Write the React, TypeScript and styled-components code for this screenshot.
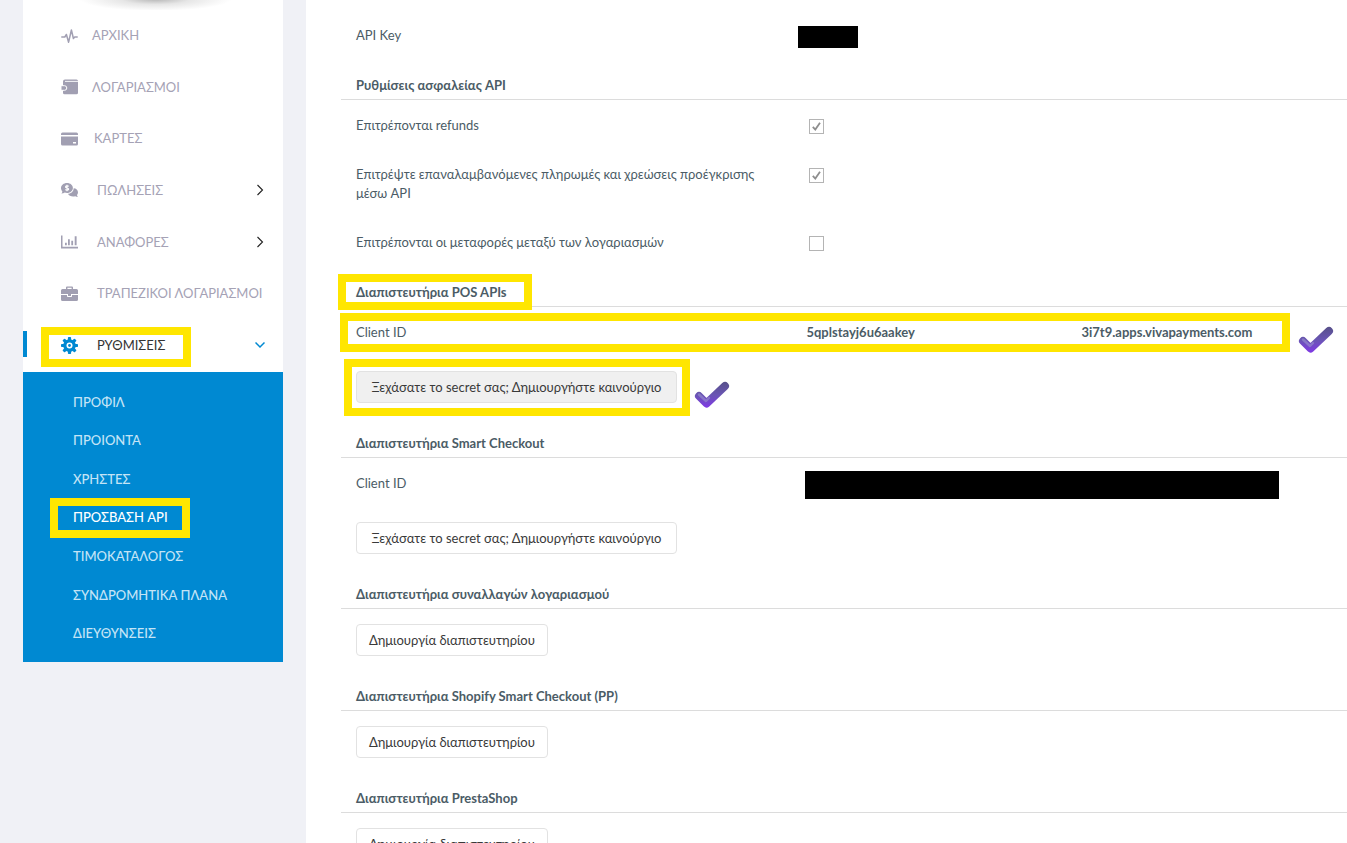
import React from "react";
import styled, { createGlobalStyle, css } from "styled-components";

const GlobalStyle = createGlobalStyle`
  *, *::before, *::after { box-sizing: border-box; }
  body {
    margin: 0;
    background: #f0f1f6;
    color: #4b5c66;
    font-family: Lato, "Noto Sans", sans-serif;
    font-size: 13px;
    line-height: 19px;
  }
`;

const Shell = styled.div`
  display: flex;
  align-items: stretch;
  height: 100vh;
  overflow: hidden;
  padding-left: 23px;
`;

const Sidebar = styled.aside`
  flex: 0 0 260px;
  align-self: flex-start;
  margin-right: 23px;
  background: #fff;
`;

const AvatarShade = styled.div`
  height: 10px;
  background: radial-gradient(ellipse 76px 12px at 51% -1px, #b4b4b4 0%, #e6e6e6 45%, #fff 100%);
`;

const Menu = styled.nav`
  display: grid;
  grid-auto-rows: 1fr;
  height: 362px;
  padding-bottom: 1px;
`;

const MenuLink = styled.a<{ $active?: boolean; $gap: number }>`
  position: relative;
  display: flex;
  align-items: center;
  gap: ${(p) => p.$gap}px;
  padding: 0 18px 0 38px;
  color: ${(p) => (p.$active ? "#333" : "#a5a2b5")};
  text-decoration: none;
  white-space: nowrap;

  > svg:first-of-type {
    flex: none;
    color: ${(p) => (p.$active ? "#0089d2" : "#a19fb2")};
  }

  ${(p) =>
    p.$active &&
    css`
      &::before {
        content: "";
        position: absolute;
        left: 0;
        top: 12px;
        width: 4px;
        height: 26px;
        background: #0089d2;
      }
    `}
`;

const Chevron = styled.svg<{ $open?: boolean }>`
  flex: none;
  margin-left: auto;
  color: ${(p) => (p.$open ? "#0089d2" : "#222")};
`;

const SubMenu = styled.nav`
  display: grid;
  grid-auto-rows: 1fr;
  height: 290px;
  padding: 11px 0 9px;
  background: #0089d2;
`;

const SubLink = styled.a<{ $active?: boolean }>`
  position: relative;
  display: flex;
  align-items: center;
  padding-left: 50px;
  color: ${(p) => (p.$active ? "#fff" : "#c4e4f6")};
  font-weight: 500;
  text-decoration: none;
`;

const Panel = styled.main`
  flex: 1;
  min-width: 0;
  padding: 25px 0 0 35px;
  background: #fff;
`;

const Section = styled.section`
  margin-bottom: 31px;
`;

const Heading = styled.h2`
  margin: 0;
  padding: 0 15px 4px;
  border-bottom: 1px solid #dcdcdc;
  font-size: 13px;
  line-height: 19px;
  font-weight: 700;
`;

const HeadingText = styled.span`
  position: relative;
  display: inline-block;
  vertical-align: top;
`;

const Body = styled.div<{ $flush?: boolean }>`
  display: flex;
  flex-direction: column;
  align-items: stretch;
  gap: 29px;
  padding: ${(p) => (p.$flush ? 0 : 15)}px 0 0 15px;
`;

const Row = styled.div`
  position: relative;
  display: grid;
  grid-template-columns: 5fr 6fr;
  padding-top: 1px;
`;

const Label = styled.label`
  padding-right: 24px;
`;

const Term = styled.span`
  padding-right: 24px;
`;

const Value = styled.div`
  position: relative;
  display: flex;
  align-items: flex-start;
`;

const ClientId = styled.strong`
  flex: 0 0 275px;
`;

const ClientHost = styled.strong``;

const Check = styled.span`
  display: grid;
  width: 15px;
  height: 15px;
  margin: 3px 0 0 3px;

  > * {
    grid-area: 1 / 1;
  }
  svg {
    pointer-events: none;
  }
`;

const CheckInput = styled.input`
  appearance: none;
  width: 15px;
  height: 15px;
  margin: 0;
  border: 1px solid #b4b4b4;
  background: #fff;
`;

const ButtonLine = styled.div`
  display: flex;
`;

const ButtonWrap = styled.div`
  position: relative;
`;

const Button = styled.button<{ $hover?: boolean; $wide?: boolean }>`
  height: 32px;
  min-width: ${(p) => (p.$wide ? 321 : 192)}px;
  padding: 0 12px;
  border: 1px solid #e2e2e2;
  border-radius: 4px;
  background: ${(p) => (p.$hover ? "#f0f0f0" : "#fff")};
  color: #3a3a3a;
  font: inherit;
  white-space: nowrap;
`;

const Redaction = styled.span<{ $x: number; $y: number; $w: number; $h: number }>`
  position: absolute;
  left: ${(p) => p.$x}px;
  top: ${(p) => p.$y}px;
  width: ${(p) => p.$w}px;
  height: ${(p) => p.$h}px;
  background: #000;
`;

/* inset order: top right bottom left */
const Marker = styled.span<{ $inset: string }>`
  position: absolute;
  inset: ${(p) => p.$inset};
  border: 8px solid #ffe600;
  pointer-events: none;
`;

const TickSvg = styled.svg<{ $right: number; $top: number }>`
  position: absolute;
  right: ${(p) => p.$right}px;
  top: ${(p) => p.$top}px;
`;

function Tick({ id, right, top }: { id: string; right: number; top: number }) {
  return (
    <TickSvg $right={right} $top={top} width="36" height="28" viewBox="0 0 36 28" fill="none" aria-hidden="true">
      <defs>
        <linearGradient id={id} x1="0" y1="1" x2="0" y2="27" gradientUnits="userSpaceOnUse">
          <stop offset="0" stopColor="#57508a" />
          <stop offset="0.5" stopColor="#6a55b4" />
          <stop offset="1" stopColor="#8038e6" />
        </linearGradient>
      </defs>
      <path d="M5 15 12.500 22.500 31 5" stroke={`url(#${id})`} strokeWidth="8" strokeLinecap="round" strokeLinejoin="round" />
      <path d="M5 13.500 12 20 15 17" stroke="#9a93cf" strokeOpacity=".6" strokeWidth="2.400" strokeLinecap="round" strokeLinejoin="round" />
    </TickSvg>
  );
}

const iconProps = { width: 17, height: 16, viewBox: "0 0 17 16", "aria-hidden": true } as const;

const PulseIcon = () => (
  <svg {...iconProps} fill="none" stroke="currentColor" strokeWidth="1.500" strokeLinecap="round" strokeLinejoin="round">
    <path d="M.8 9H3.800L5.400 6.500 7.600 14.200 10.400 2l2 8.500L13.700 9h2.500" />
  </svg>
);

const WalletIcon = () => (
  <svg {...iconProps} fill="currentColor">
    <path d="M4 .5h11.500A1.500 1.500 0 0 1 17 2v11.700a1.500 1.500 0 0 1-1.500 1.500h-12A1.500 1.500 0 0 1 2 13.700V2.500a2 2 0 0 1 2-2Z" />
    <path d="M4 2.400H17" stroke="#fff" strokeWidth=".9" />
    <path d="M0 6.700h3.500a2.300 2.300 0 0 1 0 4.600H0Z" stroke="#fff" strokeWidth="1" />
  </svg>
);

const CardIcon = () => (
  <svg {...iconProps} fill="currentColor" fillRule="evenodd">
    <path d="M1.500 1.500h14A1.500 1.500 0 0 1 17 3v1H0V3a1.500 1.500 0 0 1 1.500-1.500ZM0 5.500h17v7.500a1.500 1.500 0 0 1-1.500 1.500h-14A1.500 1.500 0 0 1 0 13Zm12 5.500v1.500h3v-1.500Z" />
  </svg>
);

const SalesIcon = () => (
  <svg {...iconProps} fill="currentColor">
    <path d="M12.700 6.200c2.400.1 4.300 1.900 4.300 4.100 0 1-.4 1.900-1 2.600.1.800.5 1.500 1 2.100-1 0-2-.3-2.800-.8-3 .9-6.200-.2-7.200-2.500 3.200 0 5.600-2.500 5.700-5.500Z" />
    <path d="M6 1c3.300 0 5.900 2.200 5.900 5s-2.600 5-5.900 5c-.8 0-1.500-.1-2.200-.4-.9.600-2 .9-3.500.9.600-.6 1-1.300 1.100-2.100C.5 8.500 0 7.300 0 6c0-2.800 2.700-5 6-5Z" />
    <path d="M7.700 4.300C7.200 3.700 4.500 3.500 4.500 4.900S7.700 5.700 7.700 7.100 4.900 8.300 4.300 7.500M6 2.700v6.600" fill="none" stroke="#fff" strokeWidth="1.100" />
  </svg>
);

const ReportsIcon = () => (
  <svg {...iconProps} fill="currentColor">
    <path d="M0 1.500h1.500v11.300H17v1.700H0ZM4 8.800h1.800v2.500H4ZM7 5.300h1.800v6H7ZM10.300 6.800h1.800v4.500h-1.800ZM13.700 2.300h1.900v9h-1.900Z" />
  </svg>
);

const BriefcaseIcon = () => (
  <svg {...iconProps} fill="currentColor">
    <path fillRule="evenodd" d="M5 3V1.500A1 1 0 0 1 6 .5h5a1 1 0 0 1 1 1V3h3.500A1.500 1.500 0 0 1 17 4.500V8H0V4.500A1.500 1.500 0 0 1 1.500 3Zm1.400 0h4.200V1.800H6.400Z" />
    <path d="M0 9h6v1.200c0 .5.300.8.800.8h3.400c.5 0 .8-.3.800-.8V9h6v4.500a1.500 1.500 0 0 1-1.500 1.500h-14A1.500 1.500 0 0 1 0 13.500Z" />
    <path d="M7 8h3v2H7Z" />
  </svg>
);

const GearIcon = () => (
  <svg width="17" height="17" viewBox="-8.500 -8.500 17 17" aria-hidden="true">
    <g fill="currentColor">
      {[0, 45, 90, 135].map((a) => (
        <rect key={a} x="-1.600" y="-8.500" width="3.200" height="17" rx=".8" transform={`rotate(${a})`} />
      ))}
      <circle r="6.300" />
    </g>
    <circle r="3" fill="#fff" />
    <circle r="1.400" fill="currentColor" />
  </svg>
);

const menu = [
  { text: "ΑΡΧΙΚΗ", Icon: PulseIcon, gap: 14 },
  { text: "ΛΟΓΑΡΙΑΣΜΟΙ", Icon: WalletIcon, gap: 14 },
  { text: "ΚΑΡΤΕΣ", Icon: CardIcon, gap: 16 },
  { text: "ΠΩΛΗΣΕΙΣ", Icon: SalesIcon, gap: 19, nested: true },
  { text: "ΑΝΑΦΟΡΕΣ", Icon: ReportsIcon, gap: 19, nested: true },
  { text: "ΤΡΑΠΕΖΙΚΟΙ ΛΟΓΑΡΙΑΣΜΟΙ", Icon: BriefcaseIcon, gap: 19 },
  { text: "ΡΥΘΜΙΣΕΙΣ", Icon: GearIcon, gap: 19, nested: true, active: true },
];

const subMenu = ["ΠΡΟΦΙΛ", "ΠΡΟΙΟΝΤΑ", "ΧΡΗΣΤΕΣ", "ΠΡΟΣΒΑΣΗ API", "ΤΙΜΟΚΑΤΑΛΟΓΟΣ", "ΣΥΝΔΡΟΜΗΤΙΚΑ ΠΛΑΝΑ", "ΔΙΕΥΘΥΝΣΕΙΣ"];

const security = [
  { id: "refunds", text: "Επιτρέπονται refunds", on: true },
  { id: "recurring", text: "Επιτρέψτε επαναλαμβανόμενες πληρωμές και χρεώσεις προέγκρισης μέσω API", on: true },
  { id: "transfers", text: "Επιτρέπονται οι μεταφορές μεταξύ των λογαριασμών", on: false },
];

const createSections = [
  "Διαπιστευτήρια συναλλαγών λογαριασμού",
  "Διαπιστευτήρια Shopify Smart Checkout (PP)",
  "Διαπιστευτήρια PrestaShop",
];

const SECRET = "Ξεχάσατε το secret σας; Δημιουργήστε καινούργιο";

export default function App() {
  return (
    <>
      <GlobalStyle />
      <Shell>
        <Sidebar>
          <AvatarShade />
          <Menu>
            {menu.map(({ text, Icon, gap, nested, active }) => (
              <MenuLink key={text} href="#" $gap={gap} $active={active}>
                <Icon />
                {text}
                {nested && (
                  <Chevron $open={active} width="10" height="12" viewBox="0 0 10 12" fill="none" stroke="currentColor" strokeWidth={active ? 1.5 : 1.1}>
                    <path d={active ? "M.5 3.500 5 8l4.500-4.500" : "M2.500 1 7.500 6l-5 5"} />
                  </Chevron>
                )}
                {active && <Marker $inset="8px 92px 4px 18px" />}
              </MenuLink>
            ))}
          </Menu>
          <SubMenu>
            {subMenu.map((text) => {
              const active = text === "ΠΡΟΣΒΑΣΗ API";
              return (
                <SubLink key={text} href="#" $active={active}>
                  {text}
                  {active && <Marker $inset="-1px 93px -1px 27px" />}
                </SubLink>
              );
            })}
          </SubMenu>
        </Sidebar>

        <Panel>
          <Section>
            <Body $flush>
              <Row>
                <Term>API Key</Term>
                <Value>
                  <Redaction $x={-8} $y={0} $w={60} $h={22} />
                </Value>
              </Row>
            </Body>
          </Section>

          <Section>
            <Heading>Ρυθμίσεις ασφαλείας API</Heading>
            <Body>
              {security.map((s) => (
                <Row key={s.id}>
                  <Label htmlFor={s.id}>{s.text}</Label>
                  <Value>
                    <Check>
                      <CheckInput id={s.id} type="checkbox" defaultChecked={s.on} />
                      {s.on && (
                        <svg width="15" height="15" viewBox="0 0 15 15" fill="none" stroke="#8e8e8e" strokeWidth="1.800" aria-hidden="true">
                          <path d="M3.800 7.800 6.300 10.500 11 3.800" />
                        </svg>
                      )}
                    </Check>
                  </Value>
                </Row>
              ))}
            </Body>
          </Section>

          <Section>
            <Heading>
              <HeadingText>
                Διαπιστευτήρια POS APIs
                <Marker $inset="-9px -25px -8px -18px" />
              </HeadingText>
            </Heading>
            <Body>
              <Row>
                <Term>Client ID</Term>
                <Value>
                  <ClientId>5qplstayj6u6aakey</ClientId>
                  <ClientHost>3i7t9.apps.vivapayments.com</ClientHost>
                </Value>
                <Marker $inset="-9px 57px -10px -16px" />
                <Tick id="tick-client" right={13} top={4} />
              </Row>
              <ButtonLine>
                <ButtonWrap>
                  <Button type="button" $hover $wide>{SECRET}</Button>
                  <Marker $inset="-12px -13px -13px -12px" />
                  <Tick id="tick-secret" right={-53} top={10} />
                </ButtonWrap>
              </ButtonLine>
            </Body>
          </Section>

          <Section>
            <Heading>Διαπιστευτήρια Smart Checkout</Heading>
            <Body>
              <Row>
                <Term>Client ID</Term>
                <Value>
                  <Redaction $x={-1} $y={-3} $w={474} $h={28} />
                </Value>
              </Row>
              <ButtonLine>
                <Button type="button" $wide>{SECRET}</Button>
              </ButtonLine>
            </Body>
          </Section>

          {createSections.map((title) => (
            <Section key={title}>
              <Heading>{title}</Heading>
              <Body>
                <ButtonLine>
                  <Button type="button">Δημιουργία διαπιστευτηρίου</Button>
                </ButtonLine>
              </Body>
            </Section>
          ))}
        </Panel>
      </Shell>
    </>
  );
}
